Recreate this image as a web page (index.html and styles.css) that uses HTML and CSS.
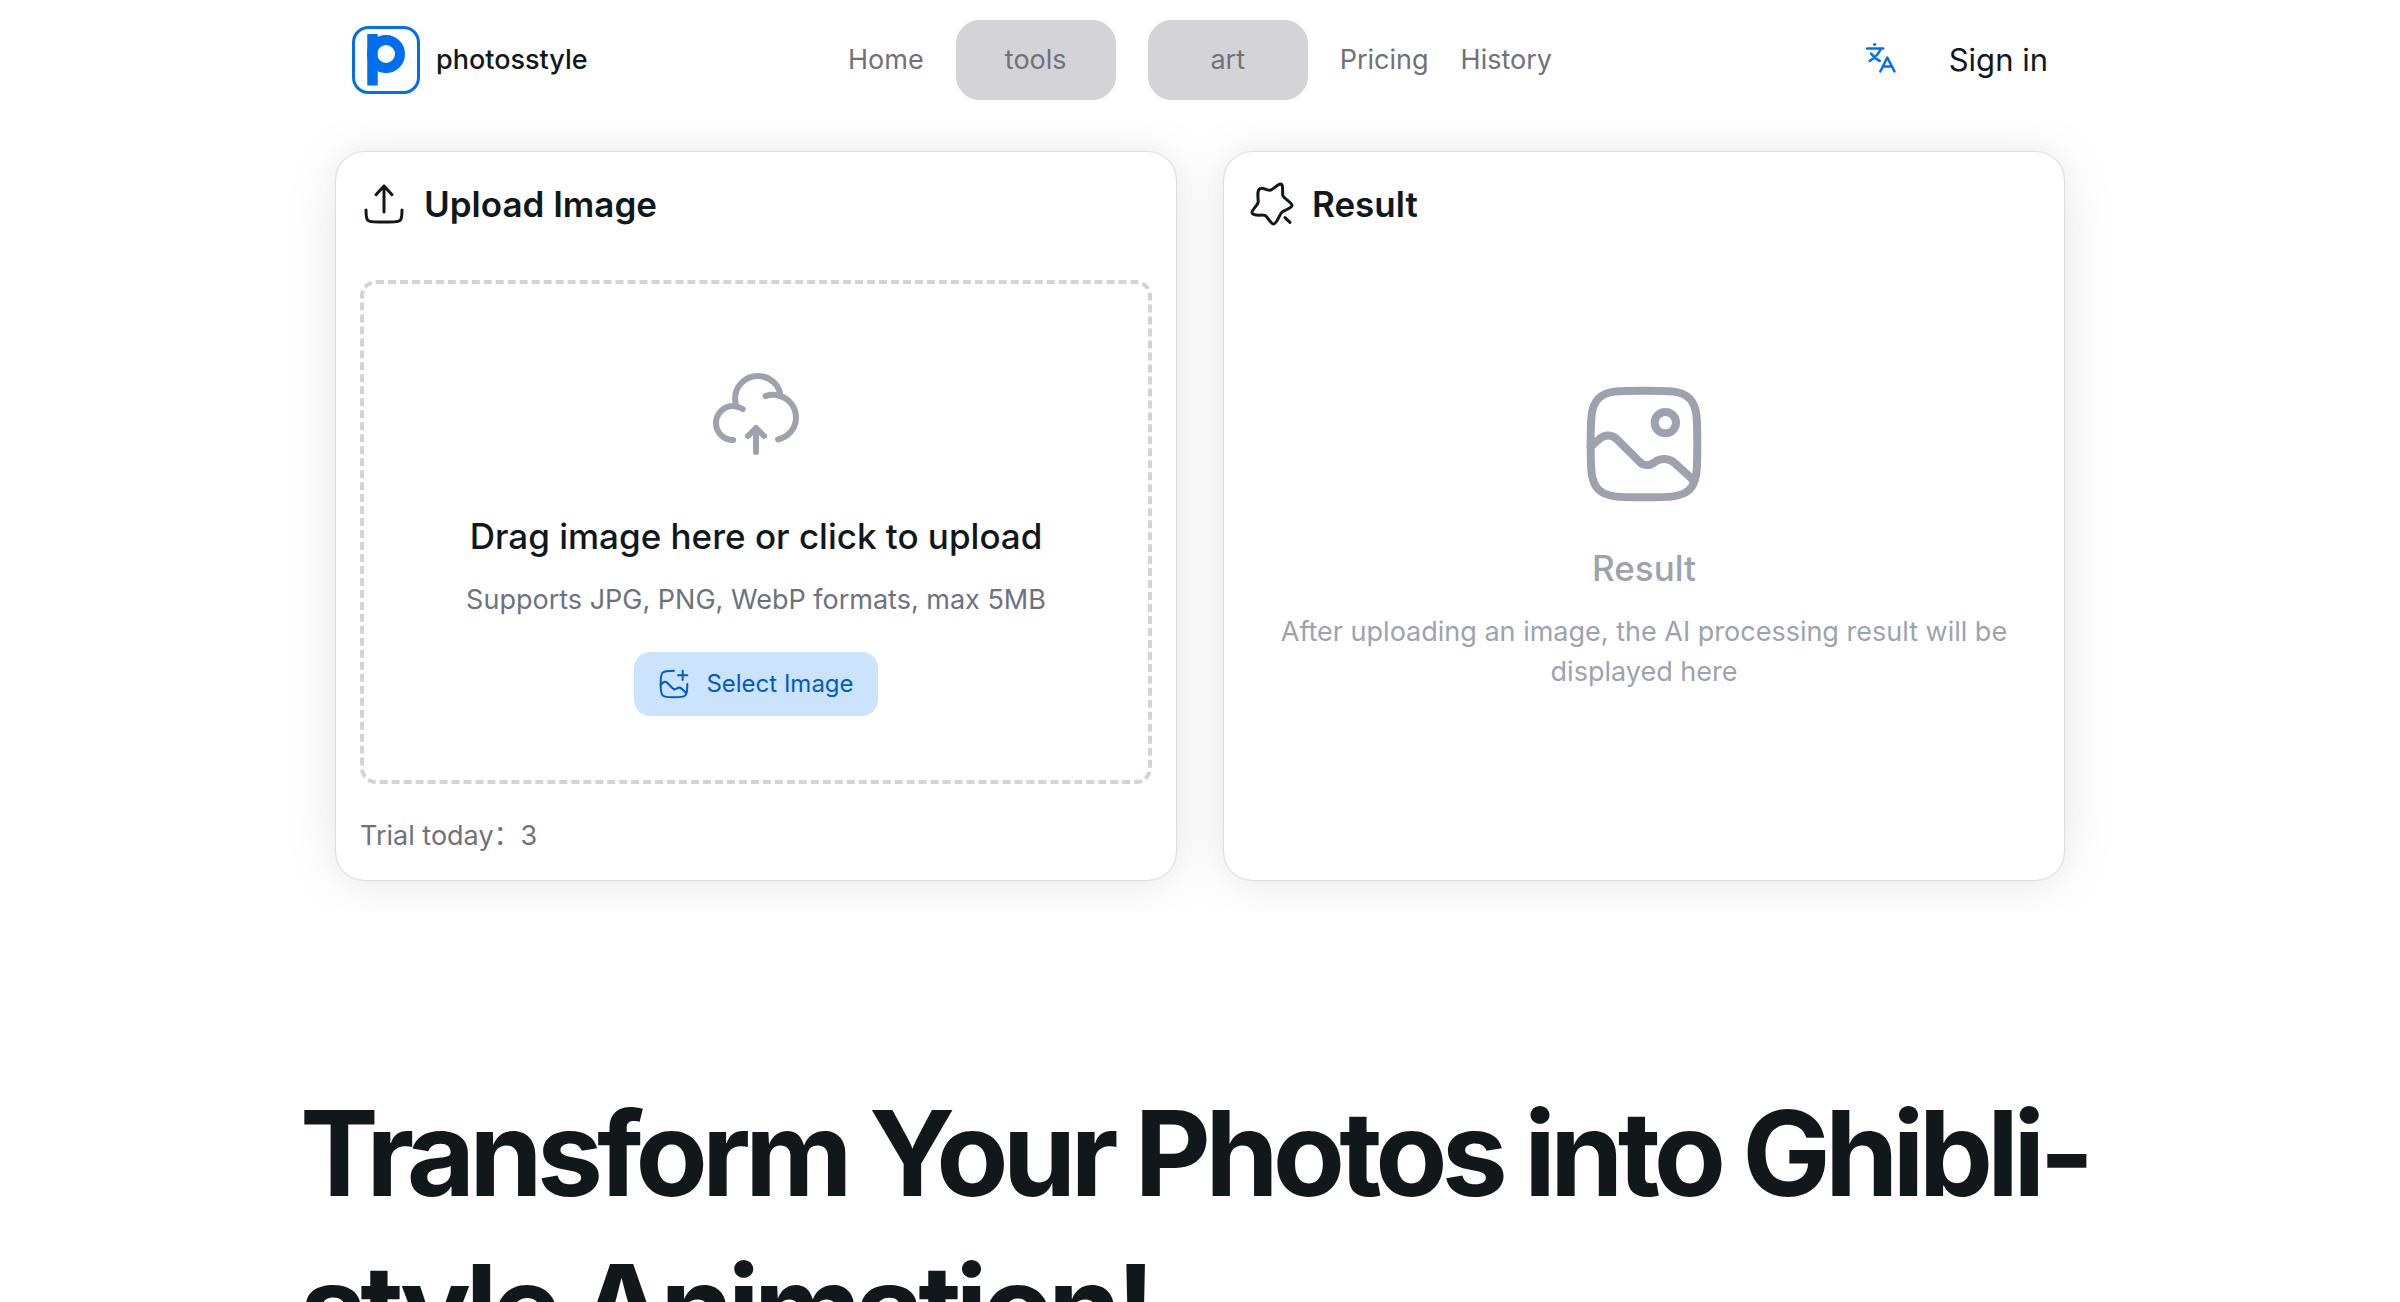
FILE: index.html
```html
<!DOCTYPE html>
<html lang="en">
<head>
    <meta charset="UTF-8">
    <meta name="viewport" content="width=device-width, initial-scale=1.0">
    <title>photosstyle</title>
    <link rel="stylesheet" href="styles.css">
</head>
<body>
    <header class="navbar">
        <a href="#" class="brand">
            <svg class="logo" viewBox="0 0 68 68" fill="none" stroke="currentColor">
                <rect x="1.5" y="1.5" width="65" height="65" rx="15" stroke-width="3"/>
                <circle cx="34" cy="28" r="14" stroke-width="10"/>
                <line x1="20.5" y1="8" x2="20.5" y2="59.5" stroke-width="10.5"/>
            </svg>
            <span>photosstyle</span>
        </a>
        <nav class="menu">
            <a href="#">Home</a>
            <button type="button" class="menu-btn">tools</button>
            <button type="button" class="menu-btn">art</button>
            <a href="#">Pricing</a>
            <a href="#">History</a>
        </nav>
        <div class="account">
            <button type="button" class="lang-btn" aria-label="Language">
                <svg viewBox="0 0 36 36" fill="none" stroke="currentColor" stroke-width="2.5" stroke-linecap="round" stroke-linejoin="round">
                    <path d="M9.2 2.5h1M2.2 6.5h16M15.8 7C13.5 12 9.5 16 4.7 19M6 11.5c2.4 3.2 5.4 6 8.8 7.5"/>
                    <path d="M15.3 29.5L22.3 15.5l7.2 14M18 24.5h8.6"/>
                </svg>
            </button>
            <a href="#">Sign in</a>
        </div>
    </header>

    <section class="workspace">
        <div class="card">
            <h2 class="card-title">
                <svg viewBox="0 0 24 24" fill="none" stroke="currentColor" stroke-width="1.5" stroke-linecap="round" stroke-linejoin="round">
                    <path d="M3 15c0 2.828 0 4.243.879 5.121C4.757 21 6.172 21 9 21h6c2.828 0 4.243 0 5.121-.879C21 19.243 21 17.828 21 15"/>
                    <path d="M12 16V3m0 0l4 4.375M12 3L8 7.375"/>
                </svg>
                Upload Image
            </h2>
            <div class="dropzone">
                <svg class="cloud" viewBox="0 0 24 24" fill="none" stroke="currentColor" stroke-width="1.5" stroke-linecap="round">
                    <path d="M6.286 19C3.919 19 2 17.104 2 14.765s1.919-4.236 4.286-4.236q.427.001.83.08m7.265-2.582a5.8 5.8 0 0 1 1.905-.321c.654 0 1.283.109 1.87.309m-11.04 2.594a5.6 5.6 0 0 1-.354-1.962C6.762 5.528 9.32 3 12.476 3c2.94 0 5.361 2.194 5.68 5.015m-11.04 2.594a4.3 4.3 0 0 1 1.55.634m9.49-3.228C20.392 8.78 22 10.881 22 13.353c0 2.707-1.927 4.97-4.5 5.52"/>
                    <path d="M12 22v-6m0 0l2 2m-2-2l-2 2" stroke-linejoin="round"/>
                </svg>
                <h3>Drag image here or click to upload</h3>
                <p>Supports JPG, PNG, WebP formats, max 5MB</p>
                <button type="button" class="select-btn">
                    <svg viewBox="0 0 24 24" fill="none" stroke="currentColor" stroke-width="1.5" stroke-linecap="round">
                        <path d="M22 12c0 4.714 0 7.071-1.465 8.535C19.072 22 16.714 22 12 22s-7.071 0-8.536-1.465C2 19.072 2 16.714 2 12s0-7.071 1.464-8.536C4.93 2 7.286 2 12 2"/>
                        <path d="M2 12.5l1.752-1.533a2.3 2.3 0 0 1 3.14.105l4.29 4.29a2 2 0 0 0 2.564.222l.299-.21a3 3 0 0 1 3.731.225L21 18.5M15 5.5h7M18.5 2v7"/>
                    </svg>
                    Select Image
                </button>
            </div>
            <p class="trial">Trial today：3</p>
        </div>

        <div class="card">
            <h2 class="card-title">
                <svg viewBox="0 0 24 24" fill="none" stroke="currentColor" stroke-width="1.5" stroke-linecap="round" stroke-linejoin="round">
                    <path d="M6.4 4.2C7.7 3.9 9.9 5.3 11.1 5.1C12.6 4.8 14.7 2.2 16.2 2C18 1.9 16.9 6.6 17.5 7.9C18.2 9.3 22 11.4 22 12.7C21.9 14.2 18.1 15 16.9 16.1C15.6 17.4 14.6 21.9 12.8 22C11.2 22 9.9 18.4 8.5 17.7C7.1 17.2 2.3 18.3 2 16.4C1.8 15 4.8 12.7 5.1 11.2C5.3 9.7 4 4.5 6.4 4.2Z"/>
                    <path d="M18.5 18.8l2.5 2.4"/>
                </svg>
                Result
            </h2>
            <div class="result-empty">
                <svg viewBox="0 0 24 24" fill="none" stroke="currentColor" stroke-width="1.5">
                    <path d="M2 12c0-4.714 0-7.071 1.464-8.536C4.93 2 7.286 2 12 2s7.071 0 8.535 1.464C22 4.93 22 7.286 22 12s0 7.071-1.465 8.535C19.072 22 16.714 22 12 22s-7.071 0-8.536-1.465C2 19.072 2 16.714 2 12Z"/>
                    <circle cx="16" cy="8" r="2"/>
                    <path stroke-linecap="round" d="M2 12.5l1.752-1.533a2.3 2.3 0 0 1 3.14.105l4.29 4.29a2 2 0 0 0 2.564.222l.299-.21a3 3 0 0 1 3.731.225L21 18.5"/>
                </svg>
                <h3>Result</h3>
                <p>After uploading an image, the AI processing result will be displayed here</p>
            </div>
        </div>
    </section>

    <main class="intro">
        <h1>Transform Your Photos into Ghibli-style Animation!</h1>
    </main>
</body>
</html>
```
FILE: styles.css
```css
* {
    box-sizing: border-box;
}

body {
    margin: 0;
    font-family: Inter, "Noto Sans CJK SC", sans-serif;
    font-size: 27px;
    line-height: 40px;
    color: #11181c;
    background-color: #fff;
}

h1, h2, h3, p {
    margin: 0;
}

a {
    color: inherit;
    text-decoration: none;
}

button {
    border: none;
    padding: 0;
    font: inherit;
    color: inherit;
    cursor: pointer;
}

svg {
    display: block;
    flex-shrink: 0;
}

.navbar {
    display: grid;
    grid-template-columns: 1fr auto 1fr;
    align-items: center;
    height: 120px;
    max-width: 1696px;
    margin: 0 auto;
}

.brand {
    display: flex;
    align-items: center;
    gap: 16px;
    font-weight: 500;
}

.logo {
    width: 68px;
    height: 68px;
    color: #006fee;
}

.menu {
    display: flex;
    align-items: center;
    gap: 32px;
    color: #71717a;
}

.menu-btn {
    width: 160px;
    height: 80px;
    border-radius: 24px;
    background-color: #d4d4d8;
}

.account {
    display: flex;
    align-items: center;
    justify-content: flex-end;
    gap: 48px;
    font-size: 31px;
}

.lang-btn {
    background: none;
    color: #006fee;
}

.lang-btn svg {
    width: 36px;
    height: 36px;
}

.workspace {
    display: grid;
    grid-template-columns: 1fr 1fr;
    gap: 48px;
    /* full width so the card shadows are only clipped above and below */
    padding: 32px max(36px, calc((100% - 1728px) / 2));
    overflow: hidden;
}

.card {
    display: flex;
    flex-direction: column;
    padding: 24px;
    border-radius: 28px;
    background-color: #fff;
    box-shadow: 0 0 30px rgba(0, 0, 0, 0.03), 0 4px 60px rgba(0, 0, 0, 0.08), 0 0 2px rgba(0, 0, 0, 0.3);
}

.card-title {
    display: flex;
    align-items: center;
    gap: 16px;
    margin-bottom: 48px;
    font-size: 35px;
    line-height: 56px;
    font-weight: 600;
}

.card-title svg {
    width: 48px;
    height: 48px;
}

.dropzone {
    display: flex;
    flex-direction: column;
    align-items: center;
    padding: 64px;
    border: 4px dashed #d1d5db;
    border-radius: 16px;
    text-align: center;
}

.cloud {
    width: 96px;
    height: 96px;
    margin: 16px 0 48px;
    color: #9ca3af;
}

.dropzone h3, .result-empty h3 {
    margin-bottom: 16px;
    font-size: 35px;
    line-height: 56px;
    font-weight: 500;
}

.dropzone p {
    color: #6b7280;
}

.select-btn {
    display: flex;
    align-items: center;
    gap: 16px;
    height: 64px;
    margin-top: 32px;
    padding: 0 24px;
    border-radius: 16px;
    background-color: #cce3fd;
    color: #005bc4;
    font-size: 24px;
}

.select-btn svg {
    width: 32px;
    height: 32px;
}

.trial {
    margin-top: 32px;
    color: #71717a;
}

.result-empty {
    display: flex;
    flex: 1;
    flex-direction: column;
    align-items: center;
    justify-content: center;
    padding-bottom: 64px;
    color: #9ca3af;
    text-align: center;
}

.result-empty svg {
    width: 128px;
    height: 128px;
    margin-bottom: 32px;
}

.intro {
    max-width: 1800px;
    margin: 0 auto;
    padding: 164px 0 64px;
}

.intro h1 {
    font-size: 118px;
    line-height: 154px;
    font-weight: 700;
    letter-spacing: -0.05em;
}
```
